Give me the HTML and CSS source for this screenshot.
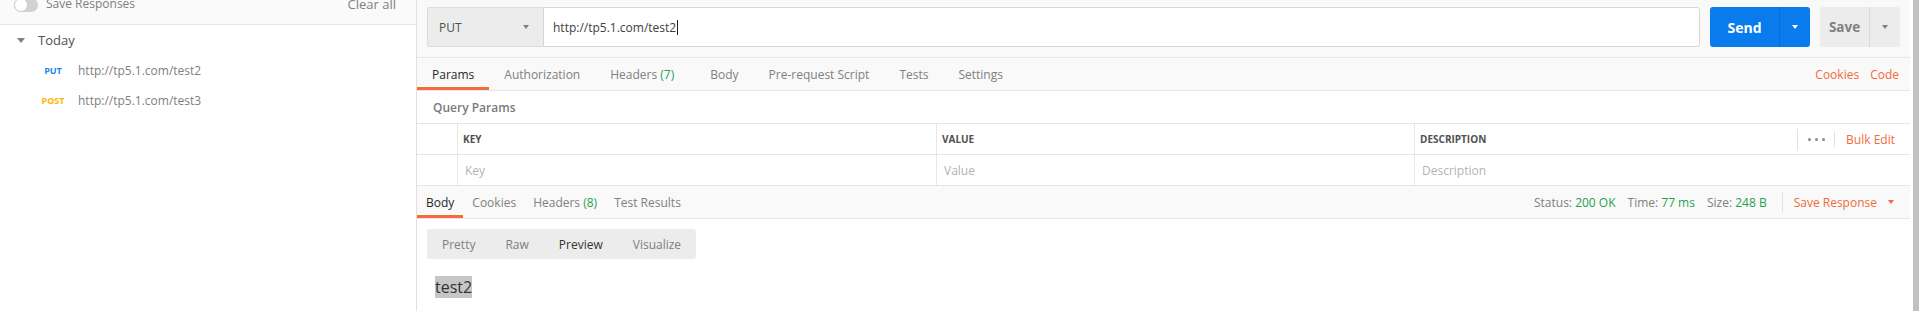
FILE: index.html
```html
<!DOCTYPE html>
<html lang="en">
<head>
  <meta charset="UTF-8" />
  <meta name="viewport" content="width=device-width, initial-scale=1.0" />
  <title>History</title>
  <link rel="stylesheet" href="styles.css">
</head>
<body>
  <div class="app">
    <aside class="sidebar">
      <div class="side-top">
        <span class="toggle"><span class="knob"></span></span>
        <span class="save-label">Save Responses</span>
        <span class="clear">Clear all</span>
      </div>
      <div class="group-head"><span class="tri-down"></span>Today</div>
      <div class="item"><span class="method put">PUT</span><span class="url">http://tp5.1.com/test2</span></div>
      <div class="item"><span class="method post">POST</span><span class="url">http://tp5.1.com/test3</span></div>
    </aside>

    <main class="main">
      <div class="req-bar">
        <div class="method-select"><span>PUT</span><span class="tri"></span></div>
        <div class="url-input">http://tp5.1.com/test2<span class="cursor"></span></div>
        <div class="send">
          <span class="send-main">Send</span>
          <span class="send-drop"><span class="tri"></span></span>
        </div>
        <div class="save">
          <span class="save-main">Save</span>
          <span class="save-drop"><span class="tri"></span></span>
        </div>
      </div>

      <div class="req-tabs">
        <span class="tab active">Params</span>
        <span class="tab">Authorization</span>
        <span class="tab">Headers <span class="count">(7)</span></span>
        <span class="tab">Body</span>
        <span class="tab">Pre-request Script</span>
        <span class="tab">Tests</span>
        <span class="tab">Settings</span>
        <span class="tab-links"><span>Cookies</span><span>Code</span></span>
      </div>

      <div class="query-title">Query Params</div>
      <div class="param-row head">
        <div class="cell"></div>
        <div class="cell">KEY</div>
        <div class="cell">VALUE</div>
        <div class="cell last">
          <span>DESCRIPTION</span>
          <span class="actions">
            <span class="vline"></span>
            <span class="dots"><i></i><i></i><i></i></span>
            <span class="vline short"></span>
            <span class="bulk">Bulk Edit</span>
          </span>
        </div>
      </div>
      <div class="param-row data">
        <div class="cell"></div>
        <div class="cell">Key</div>
        <div class="cell">Value</div>
        <div class="cell last">Description</div>
      </div>

      <div class="res-tabs">
        <span class="rtab active">Body</span>
        <span class="rtab">Cookies</span>
        <span class="rtab">Headers <span class="count">(8)</span></span>
        <span class="rtab">Test Results</span>
        <div class="res-meta">
          <span class="stat">Status: <b>200 OK</b></span>
          <span class="stat">Time: <b>77 ms</b></span>
          <span class="stat">Size: <b>248 B</b></span>
          <span class="vline"></span>
          <span class="save-res">Save Response</span>
          <span class="tri orange"></span>
        </div>
      </div>

      <div class="res-body">
        <div class="view-bar">
          <span>Pretty</span>
          <span>Raw</span>
          <span class="on">Preview</span>
          <span>Visualize</span>
        </div>
        <div class="preview"><span class="sel">test2</span></div>
      </div>
    </main>

    <div class="scroll-track"><div class="thumb"></div></div>
  </div>
</body>
</html>
```

FILE: styles.css
```css
* {
  box-sizing: border-box;
}
body {
  margin: 0;
  font-family: "Open Sans", sans-serif;
  font-size: 12px;
  color: #505050;
  background: #fff;
}
.app {
  display: flex;
  height: 311px;
  overflow: hidden;
}

/* sidebar */
.sidebar {
  width: 417px;
  flex: none;
  border-right: 1px solid #e0e0e0;
}
.side-top {
  height: 25px;
  display: flex;
  align-items: flex-start;
  padding: 0 20px 0 14px;
  background: #fafafa;
  border-bottom: 1px solid #e6e6e6;
  color: #808080;
  line-height: 16px;
}
.toggle {
  display: flex;
  width: 24px;
  height: 14px;
  margin-top: -2px;
  border-radius: 7px;
  background: #d2d2d2;
}
.knob {
  width: 14px;
  height: 14px;
  border-radius: 50%;
  background: #fff;
  border: 1px solid #cdcdcd;
}
.save-label {
  margin: -4px 0 0 8px;
}
.clear {
  margin: -4px 0 0 auto;
  font-size: 13px;
}
.group-head {
  height: 30px;
  display: flex;
  align-items: center;
  padding-left: 17px;
  font-size: 13px;
}
.tri-down {
  width: 0;
  height: 0;
  margin-right: 13px;
  border-left: 4px solid transparent;
  border-right: 4px solid transparent;
  border-top: 5px solid #808080;
}
.item {
  height: 30px;
  display: flex;
  align-items: center;
}
.method {
  width: 36px;
  margin-left: 35px;
  text-align: center;
  font-size: 9px;
  font-weight: 700;
}
.put {
  color: #1a86f0;
}
.post {
  color: #ffb400;
}
.url {
  margin-left: 7px;
  color: #808080;
}

/* request */
.main {
  flex: 1;
  min-width: 0;
  display: flex;
  flex-direction: column;
}
.req-bar {
  display: flex;
  padding: 7px 10px 10px;
  background: #f9f9f9;
  border-bottom: 1px solid #e6e6e6;
}
.method-select {
  width: 116px;
  height: 40px;
  display: flex;
  align-items: center;
  justify-content: space-between;
  padding: 0 14px 0 11px;
  background: #ececec;
  border: 1px solid #dcdcdc;
  border-right: none;
  border-radius: 3px 0 0 3px;
}
.tri {
  width: 0;
  height: 0;
  border-left: 3.5px solid transparent;
  border-right: 3.5px solid transparent;
  border-top: 4px solid #808080;
}
.url-input {
  flex: 1;
  height: 40px;
  display: flex;
  align-items: center;
  padding-left: 9px;
  background: #fff;
  border: 1px solid #d6d6d6;
  border-radius: 0 3px 3px 0;
  color: #404040;
}
.cursor {
  width: 1px;
  height: 15px;
  background: #222;
  margin-left: 1px;
}
.send {
  width: 100px;
  height: 40px;
  margin-left: 10px;
  display: flex;
  background: #097bed;
  border-radius: 3px;
  color: #fff;
}
.send-main,
.save-main {
  width: 69px;
  display: flex;
  align-items: center;
  justify-content: center;
  font-size: 14px;
  font-weight: 700;
}
.send-drop,
.save-drop {
  flex: 1;
  display: flex;
  align-items: center;
  justify-content: center;
  border-left: 1px solid rgba(0, 0, 0, 0.1);
}
.send .tri {
  border-top-color: #fff;
}
.save {
  width: 80px;
  height: 40px;
  margin-left: 10px;
  display: flex;
  background: #ececec;
  border-radius: 3px;
  color: #808080;
}
.save-main {
  width: 49px;
  font-size: 13.5px;
}
.save-drop {
  border-left-color: #d8d8d8;
}

.req-tabs,
.res-tabs {
  height: 33px;
  display: flex;
  background: #f9f9f9;
  border-bottom: 1px solid #e6e6e6;
}
.tab {
  display: flex;
  align-items: center;
  padding: 0 15px;
  color: #808080;
  white-space: pre;
}
.tab.active,
.rtab.active {
  color: #282828;
  box-shadow: inset 0 -3px #f26b3a;
}
.count {
  color: #26a150;
}
.tab .count {
  margin-right: 6px;
}
.tab-links {
  margin-left: auto;
  display: flex;
  align-items: center;
  gap: 11px;
  padding-right: 11px;
  color: #f26b3a;
}

/* params table */
.query-title {
  height: 33px;
  display: flex;
  align-items: center;
  padding-left: 16px;
  border-bottom: 1px solid #e6e6e6;
  font-weight: 600;
  color: #7a7a7a;
}
.param-row {
  height: 31px;
  display: grid;
  grid-template-columns: 41px 479px 478px 1fr;
  border-bottom: 1px solid #e6e6e6;
}
.cell {
  display: flex;
  align-items: center;
  border-right: 1px solid #e6e6e6;
}
.cell.last {
  border-right: none;
}
.head .cell {
  padding-left: 5px;
  font-size: 10px;
  font-weight: 700;
  color: #505050;
}
.data .cell {
  padding-left: 7px;
  color: #b3b3b3;
}
.actions {
  margin-left: auto;
  display: flex;
  align-items: center;
  height: 100%;
  font-size: 12px;
  font-weight: 400;
}
.vline {
  width: 1px;
  height: 21px;
  background: #e2e2e2;
}
.vline.short {
  height: 16px;
}
.dots {
  display: flex;
  gap: 4px;
  margin: 0 9px 0 10px;
}
.dots i {
  width: 3px;
  height: 3px;
  border-radius: 50%;
  background: #8a8a8a;
}
.bulk {
  margin: 0 15px 0 11px;
  color: #f26b3a;
}

/* response */
.rtab {
  display: flex;
  align-items: center;
  padding: 0 9px;
  color: #808080;
  white-space: pre;
}
.rtab:nth-child(2),
.rtab:nth-child(3) {
  padding-right: 8px;
}
.res-meta {
  margin-left: auto;
  display: flex;
  align-items: center;
  padding-right: 16px;
  color: #808080;
}
.stat {
  margin-right: 12px;
  white-space: pre;
}
.stat b {
  font-weight: 400;
  color: #26a150;
}
.res-meta .vline {
  height: 20px;
  margin: 0 11px 0 3px;
}
.save-res {
  color: #f26b3a;
}
.tri.orange {
  margin-left: 11px;
  border-top-color: #f26b3a;
}
.res-body {
  padding: 10px 0 0 10px;
}
.view-bar {
  display: inline-flex;
  height: 30px;
  background: #ececec;
  border-radius: 3px;
  color: #808080;
}
.view-bar span {
  display: flex;
  align-items: center;
  padding: 0 15px;
}
.view-bar .on {
  color: #333;
}
.preview {
  margin-top: 18px;
  padding-left: 8px;
  font-size: 16px;
  line-height: 21px;
  color: #333;
}
.sel {
  background: #c6c6c6;
}

.scroll-track {
  width: 12px;
  flex: none;
  padding: 0 3px;
  background: #fff;
}
.thumb {
  height: 100%;
  background: #c1c1c1;
}
```
